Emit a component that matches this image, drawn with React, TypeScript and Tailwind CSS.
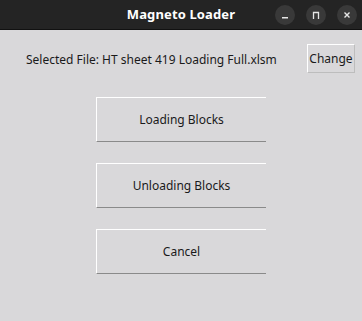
export default function App() {
  const buttons = ["Loading Blocks", "Unloading Blocks", "Cancel"];

  return (
    <div className="w-[362px] h-[321px] bg-[#d9d8da] flex flex-col overflow-hidden font-['Noto_Sans',sans-serif]">
      {/* title bar */}
      <div className="relative h-[30px] bg-[#242424] border-b border-[#111] flex items-center justify-center">
        <div className="text-[13px] font-bold text-white tracking-[0.01em]">Magneto Loader</div>
        <div className="absolute right-[5px] top-[5px] flex gap-[11px]">
          <div className="w-[20px] h-[20px] rounded-full bg-[#393939] flex items-center justify-center">
            <svg width="10" height="10" viewBox="0 0 10 10">
              <rect x="2" y="7" width="6" height="1.5" fill="#e6e6e6" />
            </svg>
          </div>
          <div className="w-[20px] h-[20px] rounded-full bg-[#393939] flex items-center justify-center">
            <svg width="10" height="10" viewBox="0 0 10 10">
              <path d="M2.5 9V2.5h5V9" fill="none" stroke="#e6e6e6" strokeWidth="1.3" />
            </svg>
          </div>
          <div className="w-[20px] h-[20px] rounded-full bg-[#393939] flex items-center justify-center">
            <svg width="10" height="10" viewBox="0 0 10 10">
              <path d="M2.5 2.5l5 5M7.5 2.5l-5 5" stroke="#e6e6e6" strokeWidth="1.4" />
            </svg>
          </div>
        </div>
      </div>

      {/* file row */}
      <div className="mt-[14px] flex items-center pl-[26px] pr-[7px]">
        <div className="flex-1 pt-[2px] text-[12px] text-[#1a1a1a]">
          Selected File: HT sheet 419 Loading Full.xlsm
        </div>
        <div className="w-[48px] h-[29px] flex items-center justify-center border border-white border-r-[#bdbdbd] border-b-[#bdbdbd] text-[12px] text-[#1a1a1a]">
          Change
        </div>
      </div>

      {/* actions */}
      <div className="mt-[24px] flex flex-col items-center gap-[21px]">
        {buttons.map((b) => (
          <div
            key={b}
            className="w-[170px] h-[45px] flex items-center justify-center border-t border-l border-white border-b border-b-[#8a8a8a] text-[12px] text-[#1a1a1a]"
          >
            {b}
          </div>
        ))}
      </div>
    </div>
  );
}
